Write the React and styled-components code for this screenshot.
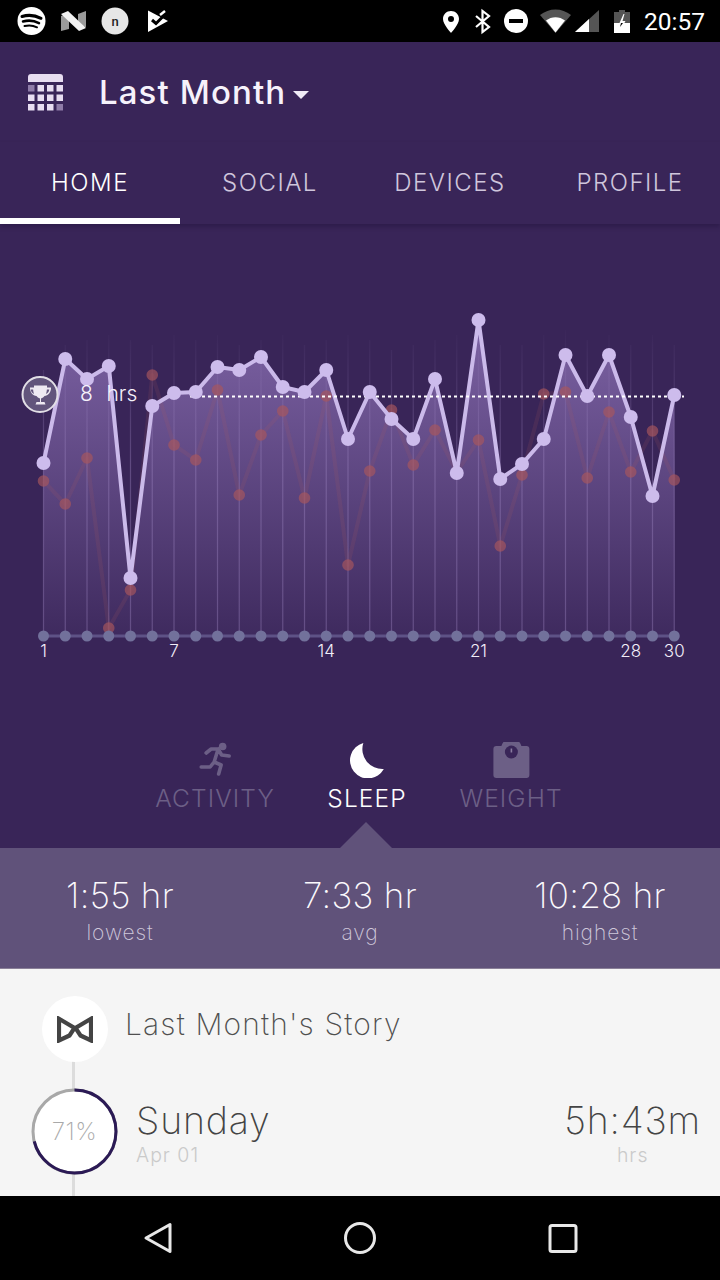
import React from "react";
import styled, { createGlobalStyle } from "styled-components";

const Global = createGlobalStyle`
  html, body { margin: 0; padding: 0; background: #392558; }
  body { font-family: Inter, "Open Sans", sans-serif; }
`;

const Page = styled.div`
  width: 720px;
  height: 1280px;
  display: flex;
  flex-direction: column;
  overflow: hidden;
  background: #392558;
`;

const StatusBar = styled.div`
  height: 42px;
  background: #000;
  display: flex;
  align-items: center;
  justify-content: space-between;
  padding-right: 15px;
`;
const StatusGroup = styled.div`
  display: flex;
  align-items: center;
  height: 42px;
`;
const StatusSvg = styled.svg`
  display: block;
`;
const Clock = styled.span`
  font-family: Roboto, sans-serif;
  font-size: 24.5px;
  color: #fff;
`;

const Header = styled.div`
  height: 100px;
  display: flex;
  align-items: center;
  padding-left: 28px;
  box-sizing: border-box;
`;
const Title = styled.div`
  margin-left: 35px;
  font-size: 33px;
  font-weight: 500;
  color: #f6f2fb;
  letter-spacing: 1.1px;
  display: flex;
  align-items: center;
`;
const Caret = styled.span`
  margin-left: 7px;
  margin-top: 5px;
  border-left: 8.5px solid transparent;
  border-right: 8.5px solid transparent;
  border-top: 8.5px solid #f0ebf7;
`;

const Tabs = styled.div`
  height: 82px;
  display: grid;
  grid-template-columns: repeat(4, 180px);
  box-shadow: 0 3px 4px rgba(30, 15, 55, 0.35);
`;
const Tab = styled.div`
  display: flex;
  align-items: center;
  justify-content: center;
  padding-top: 5px;
  box-sizing: border-box;
  font-size: 24px;
  letter-spacing: 1.5px;
  font-weight: 300;
  color: ${(p) => (p.$active ? "#fff" : "#cfc6dc")};
  border-bottom: 6px solid ${(p) => (p.$active ? "#fff" : "transparent")};
`;

const ChartSvg = styled.svg`
  display: block;
  flex: none;
`;
const AxisLabel = styled.text`
  font-family: Inter, sans-serif;
  font-size: 17px;
  font-weight: 300;
  fill: #f2eef8;
  text-anchor: middle;
`;
const GoalLabel = styled.text`
  font-family: Inter, sans-serif;
  font-size: 21px;
  font-weight: 300;
  fill: #f6f2fb;
`;

const Metrics = styled.div`
  height: 158px;
  position: relative;
  display: flex;
`;
const Metric = styled.div`
  position: absolute;
  top: 52px;
  left: ${(p) => p.$center}px;
  transform: translateX(-50%);
  display: flex;
  flex-direction: column;
  align-items: center;
  font-size: 24.5px;
  letter-spacing: 1.1px;
  font-weight: 300;
  white-space: nowrap;
  color: ${(p) => (p.$active ? "#fff" : "#6c5f86")};
`;
const MetricIcon = styled.svg`
  display: block;
  margin-bottom: 5px;
`;
const Pointer = styled.div`
  position: absolute;
  left: 340px;
  bottom: 0;
  width: 0;
  height: 0;
  border-left: 26px solid transparent;
  border-right: 26px solid transparent;
  border-bottom: 26px solid #60527a;
`;

const Band = styled.div`
  height: 121px;
  background: #60527a;
  display: grid;
  grid-template-columns: repeat(3, 240px);
  border-bottom: 1px solid #8a8098;
  box-sizing: border-box;
`;
const Stat = styled.div`
  display: flex;
  flex-direction: column;
  align-items: center;
  padding-top: 26px;
`;
const StatValue = styled.div`
  font-size: 35px;
  line-height: 42px;
  font-weight: 200;
  letter-spacing: 0.3px;
  color: #fbf9fd;
`;
const StatLabel = styled.div`
  font-size: 21px;
  line-height: 26px;
  margin-top: 4px;
  font-weight: 200;
  letter-spacing: 0.9px;
  color: #cfc8da;
`;

const Story = styled.div`
  position: relative;
  flex: 1;
  background: #f5f5f5;
  overflow: hidden;
`;
const Rail = styled.div`
  position: absolute;
  left: 72px;
  top: 90px;
  bottom: 0;
  width: 3px;
  background: #dcdcdc;
`;
const StoryHead = styled.div`
  position: relative;
  display: flex;
  align-items: center;
  padding: 27px 0 0 42px;
`;
const LogoDisc = styled.div`
  width: 66px;
  height: 66px;
  border-radius: 50%;
  background: #fff;
  display: flex;
  align-items: center;
  justify-content: center;
`;
const StoryTitle = styled.div`
  margin-left: 17px;
  font-size: 30px;
  letter-spacing: 1.15px;
  font-weight: 200;
  color: #4f4f4f;
  margin-top: -10px;
`;
const DayRow = styled.div`
  position: relative;
  display: flex;
  align-items: flex-start;
  padding: 26px 19px 0 31px;
`;
const Ring = styled.div`
  position: relative;
  width: 87px;
  height: 87px;
  flex: none;
`;
const RingText = styled.div`
  position: absolute;
  inset: 0;
  display: flex;
  align-items: center;
  justify-content: center;
  font-size: 24px;
  letter-spacing: 0.5px;
  font-weight: 200;
  color: #a9a9a9;
`;
const DayText = styled.div`
  margin-left: 18px;
  flex: 1;
  display: flex;
  flex-direction: column;
`;
const DayName = styled.div`
  font-size: 37.5px;
  letter-spacing: 0.8px;
  line-height: 42px;
  margin-top: 12px;
  font-weight: 200;
  color: #444;
`;
const DaySub = styled.div`
  font-size: 19.5px;
  letter-spacing: 1px;
  line-height: 26px;
  font-weight: 300;
  color: #cacaca;
`;
const Duration = styled.div`
  display: flex;
  flex-direction: column;
  align-items: center;
`;

const NavBar = styled.div`
  height: 84px;
  flex: none;
  background: #000;
  display: block;
`;

const X0 = 43.5;
const STEP = 21.75;
const purple = [463,359,379,366,578,406,393,392,367,370,357,387,392,370,439,392,419,439,379,473,320,479,464,439,355,396,355,417,496,395];
const red = [481,504,458,628,590,375,445,460,390,495,435,411,498,396,565,471,410,465,430,472,440,546,475,394,392,478,412,472,431,480];
const OFF = 224;
const px = (i) => X0 + STEP * i;
const toPts = (arr) => arr.map((y, i) => `${px(i).toFixed(1)},${y - OFF}`).join(" ");
const tops = [370,345,340,335,340,345,335,340,335,345,340,335,345,340,335,340,350,345,340,335,330,345,345,335,330,340,335,345,335,345];

function Chart() {
  return (
    <ChartSvg width="720" height="466" viewBox="0 0 720 466">
      <defs>
        <linearGradient id="area" gradientUnits="userSpaceOnUse" x1="0" y1="96" x2="0" y2="412">
          <stop offset="0" stopColor="#aa8cd7" stopOpacity="0.6" />
          <stop offset="1" stopColor="#aa8cd7" stopOpacity="0.05" />
        </linearGradient>
        <linearGradient id="grid" gradientUnits="userSpaceOnUse" x1="0" y1="100" x2="0" y2="240">
          <stop offset="0" stopColor="#a48cc8" stopOpacity="0" />
          <stop offset="1" stopColor="#a48cc8" stopOpacity="0.36" />
        </linearGradient>
      </defs>
      <polygon points={`${X0},412 ${toPts(purple)} ${px(29)},412`} fill="url(#area)" />
      {purple.map((_, i) => (
        <line key={i} x1={px(i)} x2={px(i) + 0.01} y1={tops[i] - OFF} y2="412" stroke="url(#grid)" strokeWidth="1.2" />
      ))}
      <polyline points={toPts(red)} fill="none" stroke="#b25a5f" strokeOpacity="0.14" strokeWidth="4" strokeLinejoin="round" />
      {red.map((y, i) => (
        <circle key={i} cx={px(i)} cy={y - OFF} r="5.800" fill="#a9565c" fillOpacity="0.66" />
      ))}
      <line x1={X0} x2={px(29)} y1="412" y2="412" stroke="#5e5286" strokeWidth="3" />
      {purple.map((_, i) => (
        <circle key={i} cx={px(i)} cy="412" r="5.500" fill="#72719b" />
      ))}
      <polyline points={toPts(purple)} fill="none" stroke="#cbbaea" strokeWidth="4" strokeLinejoin="round" />
      <line x1="190" x2="684" y1="172.500" y2="172.500" stroke="#fff" strokeWidth="2" strokeDasharray="3 3" />
      {purple.map((y, i) => (
        <circle key={i} cx={px(i)} cy={y - OFF} r="7" fill="#cdbcec" />
      ))}
      <circle cx="40" cy="170.500" r="17.500" fill="#62557c" stroke="#e2dfe6" strokeWidth="2" />
      <path
        d="M33 161.500h14c0 1 0 1.500 0 2h4c.3 5-3 8-6.500 8.500-.7 1.200-2 2-3.500 2.400v3.600h3.500l1 2.500h-10l1-2.500h3.500v-3.600c-1.500-.4-2.800-1.200-3.500-2.400-3.500-.5-6.800-3.500-6.500-8.500h4c0-.5 0-1 0-2zm-2.300 4c.2 2.300 1.500 3.800 3.300 4.500-.5-1.400-.8-3-.9-4.500zm18.600 0h-2.400c-.1 1.500-.4 3.100-.9 4.500 1.800-.7 3.100-2.200 3.300-4.500z"
        fill="#eeeaf2"
        fillRule="evenodd"
      />
      <GoalLabel x="80" y="177">8</GoalLabel>
      <GoalLabel x="106.500" y="177">hrs</GoalLabel>
      {[[0, "1"], [6, "7"], [13, "14"], [20, "21"], [27, "28"], [29, "30"]].map(([i, t]) => (
        <AxisLabel key={t} x={px(i)} y="433">{t}</AxisLabel>
      ))}
    </ChartSvg>
  );
}

function StatusLeft() {
  return (
    <StatusSvg width="180" height="42" viewBox="0 0 180 42">
      <circle cx="31.500" cy="21" r="14" fill="#fff" />
      <g fill="none" stroke="#000" strokeLinecap="round">
        <path d="M22 16.500c6-1.800 13-1.300 19 1.800" strokeWidth="3" />
        <path d="M23 21.500c5-1.400 11-1 16 1.600" strokeWidth="2.500" />
        <path d="M24.500 26c4-1 8.500-.8 12.500 1.300" strokeWidth="2" />
      </g>
      <polygon points="61,16 69,13 69,29 61,31" fill="#9a9a9a" />
      <polygon points="78,14 86,11 86,27 78,26" fill="#9a9a9a" />
      <polygon points="61,14 68,11 86,28 79,31" fill="#f2f2f2" />
      <circle cx="115" cy="21" r="13.500" fill="#e6e6e6" />
      <text x="115" y="25.500" textAnchor="middle" fontFamily="Roboto, sans-serif" fontSize="13" fontWeight="500" fill="#222">n</text>
      <polygon points="148,10.500 168,21 148,32" fill="#fff" />
      <path d="M152 20l4 3.500 9-9" fill="none" stroke="#000" strokeWidth="3" />
      <path d="M160 15l5-4" fill="none" stroke="#fff" strokeWidth="2.500" />
    </StatusSvg>
  );
}

function StatusRight() {
  return (
    <StatusSvg width="205" height="42" viewBox="440 0 205 42">
      <path fillRule="evenodd" d="M452 11c-4.500 0-8 3.500-8 8 0 5.500 8 14 8 14s8-8.500 8-14c0-4.500-3.500-8-8-8zm0 5a3 3 0 1 1 0 6 3 3 0 0 1 0-6z" fill="#fff" />
      <path d="M477 16l13 11-6.500 5V11l6.500 5-13 11" fill="none" stroke="#fff" strokeWidth="2.200" />
      <circle cx="517" cy="21" r="12" fill="#fff" />
      <rect x="510" y="19" width="14" height="4" fill="#000" />
      <path d="M541 15c9-7.500 22-7.500 31 0l-15.500 18z" fill="#555" />
      <path d="M547 20.500c5.500-4.500 13.500-4.500 19 0l-9.500 12z" fill="#fff" />
      <polygon points="576,32 600,10 600,32" fill="#555" />
      <polygon points="576,32 590,19 590,32" fill="#fff" />
      <path d="M620 10h6v2h5v21h-16V12h5z" fill="#555" />
      <path d="M615 23h16v10h-16z" fill="#fff" />
      <path d="M624.500 14l-4 9h3l-2 7 5-9h-3l2-7z" fill="#fff" />
      <path d="M622 23l-1 4 3-4z" fill="#000" />
    </StatusSvg>
  );
}

function CalendarIcon() {
  const cols = [0, 9.500, 19, 28.500];
  const rows = [11, 20.500, 30];
  return (
    <svg width="36" height="37" viewBox="0 0 36 37">
      <path d="M0 8V3a3 3 0 0 1 3-3h29a3 3 0 0 1 3 3v5z" fill="#e8def1" />
      {rows.map((y, r) =>
        cols.map((x, c) => (
          <rect
            key={`${r}${c}`}
            x={x}
            y={y}
            width="6.500"
            height="6.500"
            fill={(r === 0 && c === 0) || (r === 2 && c === 3) ? "#8f7ca8" : "#e8def1"}
          />
        ))
      )}
    </svg>
  );
}

const Bowtie = () => (
  <svg width="36" height="27" viewBox="0 0 36 27">
    <path
      d="M2 2.800L17.500 12 12.500 19.500 2 24.500zM34 2.800L18.500 12 23.500 19.500 34 24.500z"
      fill="none"
      stroke="#444"
      strokeWidth="4.200"
      strokeLinejoin="miter"
    />
  </svg>
);

export default function App() {
  const r = 41.500;
  const c = 2 * Math.PI * r;
  return (
    <Page>
      <Global />
      <StatusBar>
        <StatusGroup><StatusLeft /></StatusGroup>
        <StatusGroup>
          <StatusRight />
          <Clock>20:57</Clock>
        </StatusGroup>
      </StatusBar>
      <Header>
        <CalendarIcon />
        <Title>Last Month<Caret /></Title>
      </Header>
      <Tabs>
        <Tab $active>HOME</Tab>
        <Tab>SOCIAL</Tab>
        <Tab>DEVICES</Tab>
        <Tab>PROFILE</Tab>
      </Tabs>
      <Chart />
      <Metrics>
        <Metric $center={215}>
          <MetricIcon width="32" height="36" viewBox="199 742 32 36">
            <circle cx="222.500" cy="746.500" r="3.800" fill="#6c5f86" />
            <path d="M206 753l5-4h7l-4 13 7 3-2.500 9M218 749l3.500 6 7.500 1M214 762l-4 5h-9" fill="none" stroke="#6c5f86" strokeWidth="3.600" strokeLinejoin="round" strokeLinecap="round" />
          </MetricIcon>
          ACTIVITY
        </Metric>
        <Metric $center={367} $active>
          <MetricIcon width="36" height="36" viewBox="349 742 36 36">
            <path d="M363 743A18 18 0 1 0 383.500 769 20 20 0 0 1 363 743z" fill="#fff" />
          </MetricIcon>
          SLEEP
        </Metric>
        <Metric $center={511}>
          <MetricIcon width="38" height="36" viewBox="492 742 38 36">
            <path d="M496 746h5a10.500 10.500 0 0 1 20 0h5a3 3 0 0 1 3 3v26a3 3 0 0 1-3 3h-30a3 3 0 0 1-3-3v-26a3 3 0 0 1 3-3z" fill="#6c5f86" />
            <circle cx="511" cy="752" r="6.500" fill="#392558" />
            <rect x="510.200" y="748.500" width="1.600" height="4" fill="#8a7da0" />
          </MetricIcon>
          WEIGHT
        </Metric>
        <Pointer />
      </Metrics>
      <Band>
        <Stat><StatValue>1:55 hr</StatValue><StatLabel>lowest</StatLabel></Stat>
        <Stat><StatValue>7:33 hr</StatValue><StatLabel>avg</StatLabel></Stat>
        <Stat><StatValue>10:28 hr</StatValue><StatLabel>highest</StatLabel></Stat>
      </Band>
      <Story>
        <Rail />
        <StoryHead>
          <LogoDisc><Bowtie /></LogoDisc>
          <StoryTitle>Last Month's Story</StoryTitle>
        </StoryHead>
        <DayRow>
          <Ring>
            <svg width="87" height="87" viewBox="0 0 87 87">
              <circle cx="43.500" cy="43.500" r={r} fill="#fff" stroke="#a8a8a8" strokeWidth="3" />
              <circle
                cx="43.500"
                cy="43.500"
                r={r}
                fill="none"
                stroke="#2b1a55"
                strokeWidth="3"
                strokeDasharray={`${c * 0.71} ${c}`}
                transform="rotate(-90 43.500 43.500)"
              />
            </svg>
            <RingText>71%</RingText>
          </Ring>
          <DayText>
            <DayName>Sunday</DayName>
            <DaySub>Apr 01</DaySub>
          </DayText>
          <Duration>
            <DayName>5h:43m</DayName>
            <DaySub>hrs</DaySub>
          </Duration>
        </DayRow>
      </Story>
      <NavBar>
        <svg width="720" height="84" viewBox="0 1196 720 84">
          <path d="M170 1224.500v27L146 1238z" fill="none" stroke="#e8e8e8" strokeWidth="3" strokeLinejoin="round" />
          <circle cx="360" cy="1238" r="14.500" fill="none" stroke="#e8e8e8" strokeWidth="3" />
          <rect x="550" y="1225.500" width="26" height="26" rx="2" fill="none" stroke="#e8e8e8" strokeWidth="3" />
        </svg>
      </NavBar>
    </Page>
  );
}
